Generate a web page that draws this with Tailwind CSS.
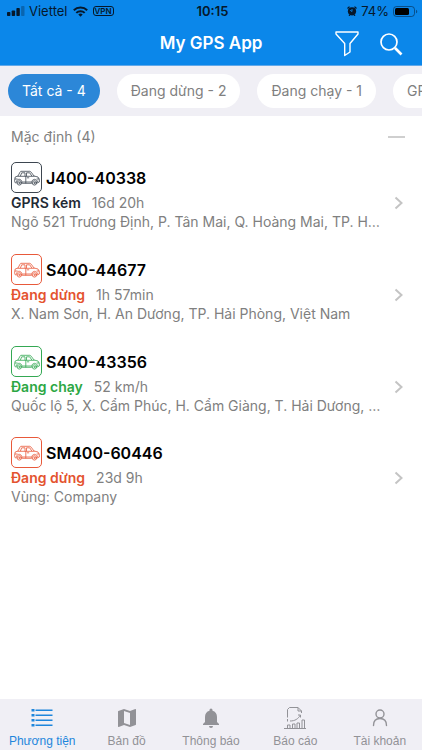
<!DOCTYPE html>
<html lang="vi">
<head>
  <meta charset="UTF-8">
  <meta name="viewport" content="width=device-width, initial-scale=1.0">
  <title>My GPS App</title>
  <script src="https://cdn.jsdelivr.net/npm/@tailwindcss/browser@4"></script>
</head>
<body class="flex h-screen flex-col overflow-hidden bg-white font-['Inter','Liberation_Sans',sans-serif] text-sm text-[#808080]">
  <!-- shared car outline -->
  <svg class="hidden">
    <symbol id="car" viewBox="0 0 26 16">
      <g fill="none" stroke="currentColor" stroke-width=".8" stroke-linejoin="round" stroke-linecap="round">
        <path d="M2.800 12.800H1.200L.6 10.800l.6-3.800L4 6l2-3.800.8-.9h9l1.400.9L20 6l4 1 1.300 2.500v2.500l-1.800.8M8.500 13.300h9"/>
        <path d="M4 6.300h16M6.500 5.800l1.200-3h3.300v3M12.500 5.800v-3h3.200l2 3M11.800 6.500v6.500M1.200 9h2M23 9h2M9 12h8M13.300 7.800h1.500"/>
        <path d="M2.500 11.500c.5-3.200 5-3.200 5.800.8M17.500 12.300c.5-4 5.500-4 6-.5"/>
        <circle cx="5.400" cy="12.900" r="2.200"/><circle cx="5.400" cy="12.900" r=".7"/>
        <circle cx="20.500" cy="12.900" r="2.200"/><circle cx="20.500" cy="12.900" r=".7"/>
      </g>
    </symbol>
  </svg>

  <header class="border-b border-[#62a9ea] bg-[#0b87ea]">
    <div class="grid h-[22px] grid-cols-3 items-center pr-1 pl-[7px] text-[13px] text-[#06182b]">
      <div class="flex items-center gap-[5px]">
        <svg class="h-[10px] w-[18px]" viewBox="0 0 18 10" fill="currentColor">
          <rect y="6" width="3.400" height="4" rx=".8"/><rect x="4.700" y="4.500" width="3.400" height="5.500" rx=".8"/><rect x="9.400" y="2" width="3.400" height="8" rx=".8"/><rect x="14.100" width="3.400" height="10" rx=".8" opacity=".3"/>
        </svg>
        <span class="-ml-px">Viettel</span>
        <svg class="h-[11px] w-[15px] shrink-0" viewBox="0 0 15 11">
          <path d="M.8 4.200a9.500 9.500 0 0 1 13.400 0M3.300 6.900a6 6 0 0 1 8.400 0" fill="none" stroke="currentColor" stroke-width="2"/><path d="M7.500 10.800 5.300 8.600a3 3 0 0 1 4.400 0z" fill="currentColor"/>
        </svg>
        <span class="rounded-[3px] border border-current px-px text-[8px] leading-[8px] font-semibold">VPN</span>
      </div>
      <span class="text-center font-semibold">10:15</span>
      <div class="flex items-center justify-end gap-1">
        <svg class="h-[10px] w-[10px] shrink-0" viewBox="0 0 10 10">
          <circle cx="5" cy="5.300" r="4.100" fill="currentColor"/><path d="M.5 2.500 2.500.6M9.500 2.500 7.500.6M2 9.700l1-1M8 9.700l-1-1" stroke="currentColor" stroke-width="1.300"/><path d="M5 3v2.500L3.200 4.300" fill="none" stroke="#0b87ea" stroke-width=".9"/>
        </svg>
        <span>74%</span>
        <svg class="h-[11px] w-[25px] shrink-0" viewBox="0 0 25 11">
          <rect x=".5" y=".5" width="21" height="10" rx="3" fill="none" stroke="currentColor" opacity=".5"/><rect x="2" y="2" width="14" height="7" rx="1.500" fill="#000"/><path d="M23 3.700c1.700.5 1.700 3.100 0 3.600z" fill="currentColor" opacity=".5"/>
        </svg>
      </div>
    </div>
    <div class="grid h-[43px] grid-cols-[1fr_auto_1fr] items-center px-[19px] text-white">
      <h1 class="col-start-2 text-[17px] font-semibold">My GPS App</h1>
      <div class="flex items-center justify-end gap-5">
        <button type="button" aria-label="Lọc">
          <svg class="h-[26px] w-6" viewBox="0 0 24 26" fill="none" stroke="currentColor" stroke-width="1.400" stroke-linejoin="round"><path d="M1 1h22v2l-8 9.500v8.500L9.700 24.500v-12L1 3z"/></svg>
        </button>
        <button type="button" aria-label="Tìm kiếm">
          <svg class="h-6 w-6" viewBox="0 0 24 24" fill="none" stroke="currentColor"><circle cx="10" cy="10" r="8" stroke-width="1.700"/><path d="m16 16 6.500 6.500" stroke-width="2.600"/></svg>
        </button>
      </div>
    </div>
  </header>

  <nav class="flex h-[50px] shrink-0 items-center gap-[17px] overflow-hidden bg-[#f0eff5] px-2 whitespace-nowrap">
    <button type="button" class="h-[34px] shrink-0 rounded-full bg-[#2c87d8] px-[14px] text-white">Tất cả - 4</button>
    <button type="button" class="h-[34px] shrink-0 rounded-full bg-white px-[14px]">Đang dừng - 2</button>
    <button type="button" class="h-[34px] shrink-0 rounded-full bg-white px-[14px]">Đang chạy - 1</button>
    <button type="button" class="h-[34px] shrink-0 rounded-full bg-white px-[14px]">GPRS kém - 1</button>
  </nav>

  <main class="min-h-0 flex-1 overflow-hidden">
    <div class="flex h-[42px] items-center justify-between pr-[17px] pl-[11px]">
      <h2>Mặc định (4)</h2>
      <button type="button" aria-label="Thu gọn" class="h-[2px] w-[17px] bg-[#cfcfcf]"></button>
    </div>
    <ul class="px-[11px] pt-1">
      <li class="flex h-[92px] items-start">
        <div class="min-w-0 flex-1">
          <div class="flex items-center gap-1">
            <span class="flex size-[31px] items-center justify-center rounded-[5px] border border-[#3d4650] text-[#3d4650]"><svg class="h-4 w-[26px]"><use href="#car"/></svg></span>
            <h3 class="text-base font-semibold text-black">J400-40338</h3>
          </div>
          <p class="flex gap-[11px] leading-5"><strong class="font-semibold text-[#1f2a35]">GPRS kém</strong><span>16d 20h</span></p>
          <p class="truncate leading-[18px]">Ngõ 521 Trương Định, P. Tân Mai, Q. Hoàng Mai, TP. Hà Nội, Việt Nam</p>
        </div>
        <svg class="mt-[34px] mr-2 ml-3 h-[14px] w-[9px] shrink-0 text-[#c4c4c4]" viewBox="0 0 9 14" fill="none" stroke="currentColor" stroke-width="2"><path d="m1.500 1.500 6 5.500-6 5.500"/></svg>
      </li>
      <li class="flex h-[92px] items-start">
        <div class="min-w-0 flex-1">
          <div class="flex items-center gap-1">
            <span class="flex size-[31px] items-center justify-center rounded-[5px] border border-[#e8593a] text-[#e8593a]"><svg class="h-4 w-[26px]"><use href="#car"/></svg></span>
            <h3 class="text-base font-semibold text-black">S400-44677</h3>
          </div>
          <p class="flex gap-[11px] leading-5"><strong class="font-semibold text-[#e4532f]">Đang dừng</strong><span>1h 57min</span></p>
          <p class="truncate leading-[18px]">X. Nam Sơn, H. An Dương, TP. Hải Phòng, Việt Nam</p>
        </div>
        <svg class="mt-[34px] mr-2 ml-3 h-[14px] w-[9px] shrink-0 text-[#c4c4c4]" viewBox="0 0 9 14" fill="none" stroke="currentColor" stroke-width="2"><path d="m1.500 1.500 6 5.500-6 5.500"/></svg>
      </li>
      <li class="flex h-[91px] items-start">
        <div class="min-w-0 flex-1">
          <div class="flex items-center gap-1">
            <span class="flex size-[31px] items-center justify-center rounded-[5px] border border-[#34a853] text-[#34a853]"><svg class="h-4 w-[26px]"><use href="#car"/></svg></span>
            <h3 class="text-base font-semibold text-black">S400-43356</h3>
          </div>
          <p class="flex gap-[11px] leading-5"><strong class="font-semibold text-[#2ca744]">Đang chạy</strong><span>52 km/h</span></p>
          <p class="truncate leading-[18px]">Quốc lộ 5, X. Cẩm Phúc, H. Cẩm Giàng, T. Hải Dương, Việt Nam</p>
        </div>
        <svg class="mt-[34px] mr-2 ml-3 h-[14px] w-[9px] shrink-0 text-[#c4c4c4]" viewBox="0 0 9 14" fill="none" stroke="currentColor" stroke-width="2"><path d="m1.500 1.500 6 5.500-6 5.500"/></svg>
      </li>
      <li class="flex h-[92px] items-start">
        <div class="min-w-0 flex-1">
          <div class="flex items-center gap-1">
            <span class="flex size-[31px] items-center justify-center rounded-[5px] border border-[#e8593a] text-[#e8593a]"><svg class="h-4 w-[26px]"><use href="#car"/></svg></span>
            <h3 class="text-base font-semibold text-black">SM400-60446</h3>
          </div>
          <p class="flex gap-[11px] leading-5"><strong class="font-semibold text-[#e4532f]">Đang dừng</strong><span>23d 9h</span></p>
          <p class="truncate leading-[18px]">Vùng: Company</p>
        </div>
        <svg class="mt-[34px] mr-2 ml-3 h-[14px] w-[9px] shrink-0 text-[#c4c4c4]" viewBox="0 0 9 14" fill="none" stroke="currentColor" stroke-width="2"><path d="m1.500 1.500 6 5.500-6 5.500"/></svg>
      </li>
    </ul>
  </main>

  <footer class="grid h-[51px] shrink-0 grid-cols-5 bg-[#f0eff5] pt-[7px] font-['Liberation_Sans',sans-serif] text-xs leading-4 whitespace-nowrap text-[#929297]">
    <a href="#" class="flex flex-col items-center gap-[3px] text-[#1e86dc]">
      <svg class="size-6" viewBox="0 0 24 24" fill="currentColor"><path d="M1.500 3h3v2.500h-3zM1.500 8h3v2.500h-3zM1.500 13h3v2.500h-3zM1.500 18h3v2.500h-3zM5.500 3.500h17V5h-17zM5.500 8.500h17V10h-17zM5.500 13.500h17V15h-17zM5.500 18.500h17V20h-17z"/></svg>
      Phương tiện
    </a>
    <a href="#" class="flex flex-col items-center gap-[3px]">
      <svg class="size-6" viewBox="0 0 24 24" fill="currentColor" fill-rule="evenodd"><path d="m20.500 3-.2.100L15 5.100 9 3 3.400 4.900a.5.500 0 0 0-.4.500v15.100c0 .3.200.5.500.5l.2-.100L9 18.900l6 2.100 5.600-1.900c.2-.100.400-.300.400-.500V3.500c0-.300-.200-.500-.500-.500zM15 19l-6-2.100V5l6 2.100z"/></svg>
      Bản đồ
    </a>
    <a href="#" class="flex flex-col items-center gap-[3px]">
      <svg class="size-6" viewBox="0 0 24 24" fill="currentColor"><path d="M12 22a2 2 0 0 0 2-2h-4a2 2 0 0 0 2 2zM18 16v-5c0-3.100-1.600-5.600-4.500-6.300V4a1.500 1.500 0 0 0-3 0v.7C7.600 5.400 6 7.900 6 11v5l-2 2v1h16v-1z"/></svg>
      Thông báo
    </a>
    <a href="#" class="flex flex-col items-center gap-[3px]">
      <svg class="size-6" viewBox="0 0 24 24" fill="none" stroke="currentColor"><path d="M4.500 11.500v-8l2-2H15L18.500 5v2M15 1.500V5h3.500M4.500 13v2.500M7 15c5 0 8-2 10.500-6M15 9h2.500v2.500M1 22.500h22M4.500 22v-3H7v3M9.500 22v-4H12v4M14 22v-5h2.500v5M19 22v-8h2.500v8"/></svg>
      Báo cáo
    </a>
    <a href="#" class="flex flex-col items-center gap-[3px]">
      <svg class="size-6" viewBox="0 0 24 24" fill="none" stroke="currentColor" stroke-width="1.400" stroke-linecap="round"><circle cx="12" cy="8" r="4"/><path d="M5.500 19.500c0-4.500 2.500-7 6.500-7s6.500 2.500 6.500 7"/></svg>
      Tài khoản
    </a>
  </footer>
</body>
</html>
